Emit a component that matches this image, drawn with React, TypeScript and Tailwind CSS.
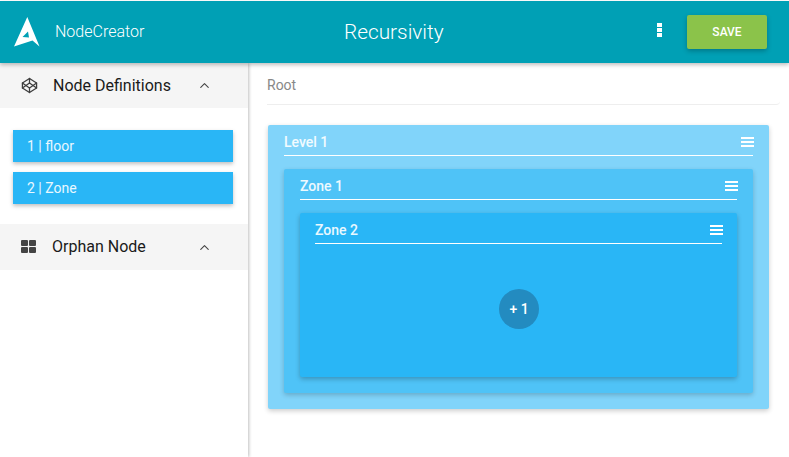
import { ChevronUp, Codepen } from 'lucide-react';

function Logo() {
  return (
    <svg width="26" height="30" viewBox="0 0 26 30" className="shrink-0">
      <path fillRule="evenodd" d="M13.3 0 L25.5 29.5 L18.5 23.5 L0 29.5 Z M8.5 20 L14 14.5 L15 20.5 Z" fill="#fff" />
    </svg>
  );
}

function Burger() {
  return (
    <div className="flex flex-col gap-[2px] w-[13px] -mr-[1px] shrink-0">
      <div className="h-[2px] bg-white" />
      <div className="h-[2px] bg-white" />
      <div className="h-[2px] bg-white" />
    </div>
  );
}

function CardTitle({ title }: { title: string }) {
  return (
    <div className="h-[31px] flex items-center justify-between border-b border-white pt-[4px] text-[14px] font-medium text-white/90">
      <span>{title}</span>
      <Burger />
    </div>
  );
}

function SideHeader({ label, icon, className, labelClass }: { label: string; icon: React.ReactNode; className: string; labelClass: string }) {
  return (
    <div className={'flex items-center bg-[#f5f5f5] ' + className}>
      <div className="w-[60px] pl-[21px]">{icon}</div>
      <span className={'text-[16px] text-[#1a1a1a] ' + labelClass}>{label}</span>
      <ChevronUp size={15} strokeWidth={1.8} className="text-[#444]" />
    </div>
  );
}

export default function App() {
  return (
    <div className="w-[789px] h-[457px] overflow-hidden bg-white flex flex-col font-['Roboto',sans-serif]">
      <header className="relative z-10 mt-[1px] h-[62px] shrink-0 bg-[#00a0b5] flex items-center text-white shadow-[0_2px_4px_rgba(0,0,0,0.25)]">
        <div className="w-[344px] flex items-center pl-[14px] gap-[15px]">
          <Logo />
          <span className="text-[16px] font-light text-white">NodeCreator</span>
        </div>
        <div className="w-[313px] pt-[2px] text-[20.8px] font-light">Recursivity</div>
        <div className="flex flex-col gap-[1px] w-[5px] -mt-[5px]">
          <div className="h-[4px] bg-white" />
          <div className="h-[4px] bg-white" />
          <div className="h-[4px] bg-white" />
        </div>
        <button className="ml-[25px] w-[80px] h-[34px] rounded-[2px] bg-[#8bc34a] text-[12px] font-medium text-white shadow-[0_2px_5px_rgba(0,0,0,0.26)]">
          SAVE
        </button>
      </header>

      <div className="flex-1 flex min-h-0">
        <aside className="w-[248px] shrink-0 bg-white shadow-[1px_0_3px_rgba(0,0,0,0.25)]">
          <SideHeader label="Node Definitions" labelClass="w-[144px] -ml-[7px]" className="h-[45px]" icon={<Codepen size={17} strokeWidth={1.8} className="text-[#3d3d3d]" />} />
          <div className="pl-[13px] pr-[15px] pt-[22px] pb-[20px] flex flex-col gap-[10px]">
            <div className="h-[32px] flex items-center pl-[14px] bg-[#29b6f6] text-[14px] text-white/90 shadow-[0_2px_4px_rgba(0,0,0,0.25)]">1 | floor</div>
            <div className="h-[32px] flex items-center pl-[14px] bg-[#29b6f6] text-[14px] text-white/90 shadow-[0_2px_4px_rgba(0,0,0,0.25)]">2 | Zone</div>
          </div>
          <SideHeader
            label="Orphan Node"
            labelClass="w-[145px] -ml-[8px]"
            className="h-[46px]"
            icon={
              <svg width="15" height="14" viewBox="0 0 15 14" fill="#444">
                <rect x="0" y="0" width="7" height="6" rx="1" />
                <rect x="8" y="0" width="7" height="6" rx="1" />
                <rect x="0" y="7" width="7" height="6" rx="1" />
                <rect x="8" y="7" width="7" height="6" rx="1" />
              </svg>
            }
          />
        </aside>

        <main className="flex-1 min-w-0 pl-[20px] pr-[20px]">
          <div className="h-[42px] -mr-[11px] -ml-[1px] flex items-center pt-[4px] border-b border-[#eeeeee] rounded-br-[4px] text-[14px] text-[#888]">Root</div>
          <div className="mt-[20px] h-[284px] rounded-[2px] bg-[#81d4fa] px-[16px] shadow-[0_2px_5px_rgba(0,0,0,0.2)]">
            <CardTitle title="Level 1" />
            <div className="mt-[13px] h-[224px] rounded-[2px] bg-[#4fc3f7] px-[16px] shadow-[0_2px_5px_rgba(0,0,0,0.2)]">
              <CardTitle title="Zone 1" />
              <div className="mt-[13px] h-[164px] rounded-[2px] bg-[#29b6f6] px-[15px] shadow-[0_2px_5px_rgba(0,0,0,0.25)]">
                <CardTitle title="Zone 2" />
                <div className="pt-[45px] flex justify-center pl-[1px]">
                  <div className="w-[40px] h-[40px] rounded-full bg-[#238bc0] flex items-center justify-center text-[14px] font-medium text-white">+ 1</div>
                </div>
              </div>
            </div>
          </div>
        </main>
      </div>
    </div>
  );
}
